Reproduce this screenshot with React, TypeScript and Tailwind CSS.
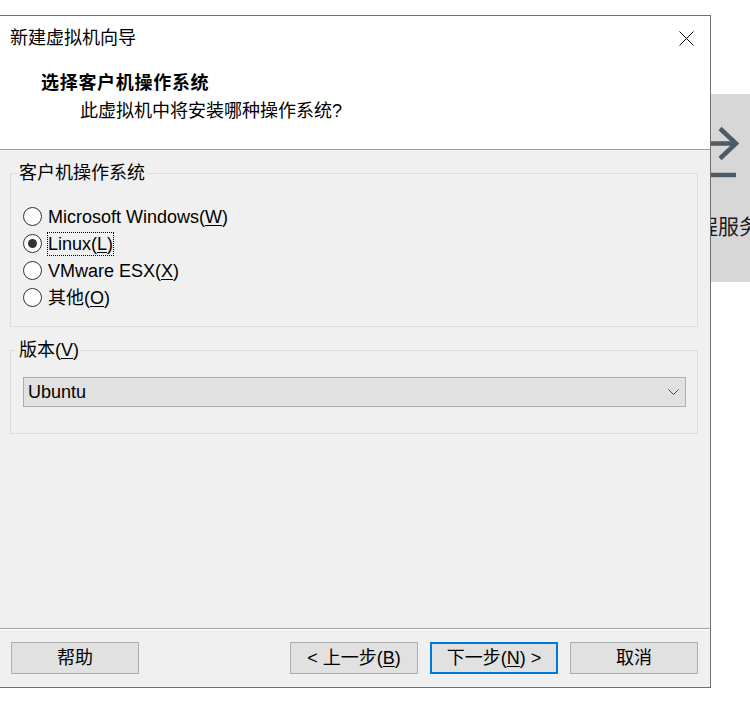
import React from "react";

function Radio({ checked, label, focus }: { checked?: boolean; label: React.ReactNode; focus?: boolean }) {
  return (
    <div className="h-[27px] flex items-center">
      <div className="w-[19px] h-[19px] rounded-full border border-[#333333] bg-white flex items-center justify-center">
        {checked && <div className="w-[9px] h-[9px] rounded-full bg-[#333333]" />}
      </div>
      <span
        className={
          "ml-[5px] leading-[22px] border " +
          (focus ? "border-dotted border-black" : "border-transparent")
        }
      >
        {label}
      </span>
    </div>
  );
}

export default function App() {
  return (
    <div className="relative w-[750px] h-[715px] overflow-hidden bg-white font-['Liberation_Sans','Noto_Sans_CJK_SC',sans-serif] text-[18px] text-black">
      {/* background panel behind dialog */}
      <div className="absolute left-[600px] top-[94px] w-[150px] h-[188px] bg-[#d7d7d7] flex flex-col">
        <svg className="ml-[90px] mt-[26px]" width="50" height="60" viewBox="0 0 50 60" fill="none">
          <path d="M0 23.5 H46" stroke="#4b5b67" strokeWidth="4.5" />
          <path d="M30 8.5 L46 23.5 L30 38.5" stroke="#4b5b67" strokeWidth="4.5" />
          <path d="M0 55 H46" stroke="#4b5b67" strokeWidth="4.5" />
        </svg>
        <div className="ml-[76px] mt-[33px] text-[21px] leading-[24px] text-[#1a1a1a] whitespace-nowrap font-['Noto_Sans_CJK_SC',sans-serif]">
          远程服务器
        </div>
      </div>

      {/* dialog */}
      <div className="absolute left-0 top-[15px] w-[711px] h-[673px] border-t border-r border-b border-[#707070] bg-white flex flex-col">
        <div className="h-[44px] flex items-center justify-between pl-[10px] pr-[16px]">
          <span className="leading-[20px]">新建虚拟机向导</span>
          <svg width="15" height="15" viewBox="0 0 15 15">
            <path d="M0.5 0.5 L14.5 14.5 M14.5 0.5 L0.5 14.5" stroke="#000" strokeWidth="1" />
          </svg>
        </div>
        <div className="h-[90px] border-b border-[#a0a0a0] pt-[13px]">
          <div className="pl-[41px] font-bold leading-[20px] tracking-[0.7px]">选择客户机操作系统</div>
          <div className="pl-[80px] mt-[8px] leading-[20px]">此虚拟机中将安装哪种操作系统?</div>
        </div>

        <div className="flex-1 bg-[#f0f0f0] pl-[10px] pr-[12px] pt-[14px]">
          <fieldset className="m-0 p-0 border border-[#dcdcdc]">
            <legend className="ml-[6px] px-[2px] leading-[18px]">客户机操作系统</legend>
            <div className="pl-[12px] pt-[21px] pb-[15px]">
              <Radio label={<>Microsoft Windows(<u className="underline-offset-2">W</u>)</>} />
              <Radio checked focus label={<>Linux(<u className="underline-offset-2">L</u>)</>} />
              <Radio label={<>VMware ESX(<u className="underline-offset-2">X</u>)</>} />
              <Radio label={<>其他(<u className="underline-offset-2">O</u>)</>} />
            </div>
          </fieldset>

          <fieldset className="m-0 mt-[14px] p-0 border border-[#dcdcdc]">
            <legend className="ml-[6px] px-[2px] leading-[18px]">
              版本(<u className="underline-offset-2">V</u>)
            </legend>
            <div className="pt-[18px] pb-[26px]">
              <div className="ml-[12px] mr-[11px] h-[30px] border border-[#adadad] bg-[#e1e1e1] flex items-center justify-between pl-[4px] pr-[6px]">
                <span className="leading-[20px]">Ubuntu</span>
                <svg width="11" height="7" viewBox="0 0 11 7" fill="none">
                  <path d="M0.5 0.5 L5.5 5.5 L10.5 0.5" stroke="#444" strokeWidth="1" />
                </svg>
              </div>
            </div>
          </fieldset>
        </div>

        <div className="h-[59px] border-t border-[#a0a0a0] bg-[#f0f0f0] shadow-[inset_0_1px_0_#ffffff] flex items-start pt-[13px] pl-[11px] pr-[12px]">
          <div className="w-[128px] h-[32px] border border-[#adadad] bg-[#e1e1e1] flex items-center justify-center leading-[20px]">
            帮助
          </div>
          <div className="ml-auto flex gap-[12px]">
            <div className="w-[128px] h-[32px] border border-[#adadad] bg-[#e1e1e1] flex items-center justify-center leading-[20px] whitespace-pre">
              {"< 上一步("}<u className="underline-offset-2">B</u>{")"}
            </div>
            <div className="w-[128px] h-[32px] border-2 border-[#0078d7] bg-[#e1e1e1] flex items-center justify-center leading-[20px] whitespace-pre">
              {"下一步("}<u className="underline-offset-2">N</u>{") >"}
            </div>
            <div className="w-[128px] h-[32px] border border-[#adadad] bg-[#e1e1e1] flex items-center justify-center leading-[20px]">
              取消
            </div>
          </div>
        </div>
      </div>
    </div>
  );
}
